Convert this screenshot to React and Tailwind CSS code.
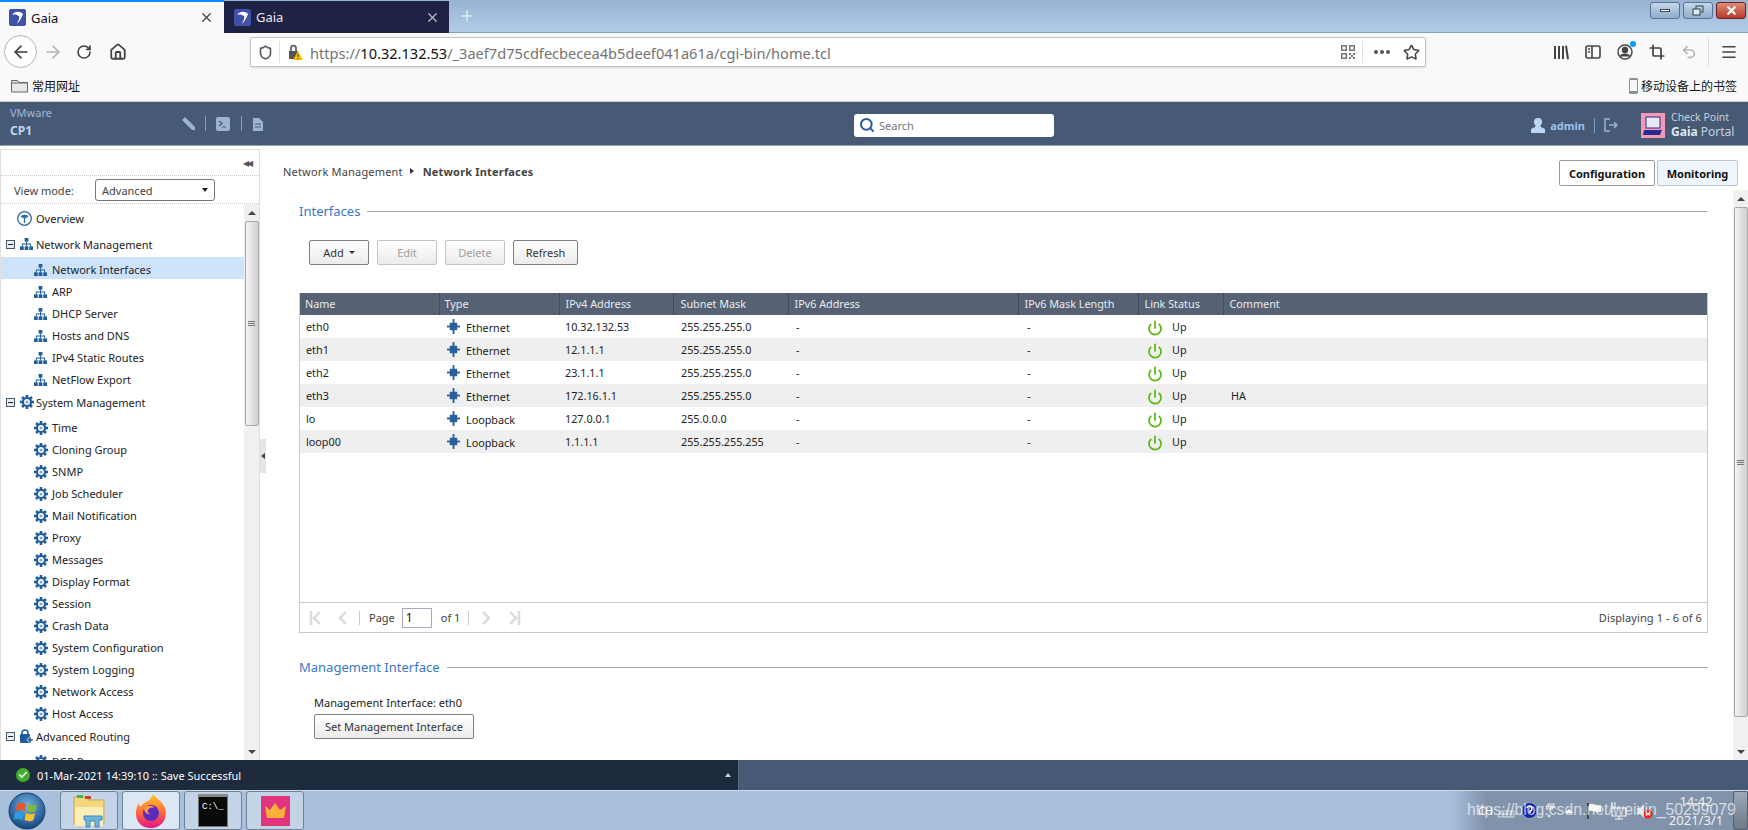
import { ArrowLeft, ArrowRight, RotateCw, Home, Shield, Star, Menu, Crop, Undo2, X, Plus, Power, Search, Check } from "lucide-react"

const netItems = ["Network Interfaces", "ARP", "DHCP Server", "Hosts and DNS", "IPv4 Static Routes", "NetFlow Export"]
const sysItems = ["Time", "Cloning Group", "SNMP", "Job Scheduler", "Mail Notification", "Proxy", "Messages", "Display Format", "Session", "Crash Data", "System Configuration", "System Logging", "Network Access", "Host Access"]

const rows = [
  ["eth0", "Ethernet", "10.32.132.53", "255.255.255.0", "Up", ""],
  ["eth1", "Ethernet", "12.1.1.1", "255.255.255.0", "Up", ""],
  ["eth2", "Ethernet", "23.1.1.1", "255.255.255.0", "Up", ""],
  ["eth3", "Ethernet", "172.16.1.1", "255.255.255.0", "Up", "HA"],
  ["lo", "Loopback", "127.0.0.1", "255.0.0.0", "Up", ""],
  ["loop00", "Loopback", "1.1.1.1", "255.255.255.255", "Up", ""],
]

const columns = [
  ["Name", "w-[139px] pl-[5px]"],
  ["Type", "w-[120px] pl-[5px]"],
  ["IPv4 Address", "w-[114px] pl-[6px]"],
  ["Subnet Mask", "w-[115px] pl-[7px]"],
  ["IPv6 Address", "w-[230px] pl-[6px]"],
  ["IPv6 Mask Length", "w-[120px] pl-[6px]"],
  ["Link Status", "w-[85px] pl-[6px]"],
  ["Comment", "pl-[6px]"],
]

const Favicon = () => (
  <svg width="17" height="17" viewBox="0 0 17 17" className="shrink-0">
    <rect width="17" height="17" rx="2" fill="#3f51a8" />
    <path d="M3 6c3-4 8-4 11-1-1 3-3 7-6 10 1-3 3-6 2-8-2-1-4-2-7-1z" fill="#fff" />
  </svg>
)

const NetIcon = () => (
  <svg width="13" height="12" viewBox="0 0 14 13" className="shrink-0" fill="#1f5d9c">
    <rect x="5" y="0" width="4" height="4" />
    <rect x="0" y="9" width="4" height="4" />
    <rect x="5" y="9" width="4" height="4" />
    <rect x="10" y="9" width="4" height="4" />
    <path d="M6.500 4h1v2H12v3h-1V7H7.500v2h-1V7H3v2H2V6h4.500z" />
  </svg>
)

const GearIcon = () => (
  <svg width="14" height="14" viewBox="0 0 16 16" className="shrink-0">
    {[0, 45, 90, 135].map((a) => (
      <rect key={a} x="6.500" y="0" width="3" height="16" fill="#1f5d9c" transform={`rotate(${a} 8 8)`} />
    ))}
    <circle cx="8" cy="8" r="5.800" fill="#1f5d9c" />
    <circle cx="8" cy="8" r="3.400" fill="#fff" />
    <circle cx="8" cy="8" r="1.800" fill="#7fa8d0" />
  </svg>
)

const ChipIcon = () => (
  <svg width="13" height="15" viewBox="0 0 14 16" className="shrink-0 -mt-[2px]" fill="#2b5f99">
    <rect x="3" y="4" width="8" height="8" />
    <rect x="0" y="7" width="14" height="2" />
    <rect x="6" y="0" width="2" height="16" />
  </svg>
)

const Minus = () => (
  <span className="w-[9px] h-[9px] border border-[#4a5a6a] bg-[#e8eef4] flex items-center justify-center shrink-0">
    <span className="w-[5px] h-px bg-[#222]" />
  </span>
)

const TreeHead = ({ icon, label }) => (
  <div className="h-[22px] my-[2px] pl-[5px] flex items-center shrink-0">
    <Minus />
    <span className="w-[21px] flex justify-center pl-[2px]">{icon}</span>
    <span>{label}</span>
  </div>
)

const TreeItem = ({ icon, label, active }) => (
  <div className={`h-[22px] pl-[33px] pt-[3px] flex items-center shrink-0 ${active ? "bg-[#cde3fb]" : ""}`}>
    <span className="w-[18px]">{icon}</span>
    <span>{label}</span>
  </div>
)

const Scrollbar = ({ grip }) => (
  <div className="w-[15px] shrink-0 bg-[#f0f0f0] flex flex-col items-center">
    <div className="h-[17px] w-full flex items-center justify-center">
      <span className="border-x-[4px] border-x-transparent border-b-[4px] border-b-[#444]" />
    </div>
    <div className={`w-[14px] ${grip} rounded-[2px] border border-[#a8a8a8] bg-linear-to-r from-[#f4f4f4] to-[#cfcfcf] flex flex-col gap-px items-center justify-center`}>
      <span className="w-[7px] h-px bg-[#777]" />
      <span className="w-[7px] h-px bg-[#777]" />
      <span className="w-[7px] h-px bg-[#777]" />
    </div>
    <div className="flex-1" />
    <div className="h-[17px] w-full flex items-center justify-center">
      <span className="border-x-[4px] border-x-transparent border-t-[4px] border-t-[#444]" />
    </div>
  </div>
)

const Btn = ({ children, disabled, className = "" }) => (
  <button className={`h-[25px] rounded-[2px] border bg-linear-to-b from-white to-[#ebebeb] flex items-center justify-center ${disabled ? "border-[#c4c4c4] text-[#a0a0a0]" : "border-[#7f7f7f] text-[#333]"} ${className}`}>
    {children}
  </button>
)

const SectionTitle = ({ children, className = "" }) => (
  <div className={`h-[20px] flex items-center gap-[7px] ${className}`}>
    <span className="text-[13px] text-[#3a78c9]">{children}</span>
    <span className="flex-1 h-px bg-[#a9a9a9]" />
  </div>
)

const WinBtn = ({ children, className = "" }) => (
  <div className={`w-[30px] h-[17px] rounded-[3px] border border-[#5c7290] flex items-center justify-center ${className}`}>{children}</div>
)

const TaskBtn = ({ children, lit }) => (
  <div className={`w-[58px] h-[39px] rounded-[3px] border border-[#6f8296] flex items-center justify-center ${lit ? "bg-[#dbe7f4]" : "bg-[#c3d4e8]"}`}>{children}</div>
)

export default function App() {
  return (
    <div className="w-[1748px] h-[830px] overflow-hidden relative flex flex-col bg-white text-[11px] leading-none text-[#222] font-['Noto_Sans',sans-serif]">
      {/* browser tabs */}
      <div className="h-[33px] shrink-0 flex bg-linear-to-b from-[#98b3d2] to-[#b2cde9] border-b border-[#8aa0b8]">
        <div className="w-[224px] h-[33px] bg-[#f9f9fa] border-t-2 border-[#0a84ff] flex items-center pl-[9px] pr-[10px] gap-[5px] text-[13px] text-[#111]">
          <Favicon />
          <span className="flex-1 pt-[1px]">Gaia</span>
          <X size={15} className="text-[#444]" />
        </div>
        <div className="w-[225px] h-[32px] mt-px bg-[#1e2244] flex items-center pl-[10px] pr-[9px] gap-[5px] text-[13px] text-[#e8e8f0]">
          <Favicon />
          <span className="flex-1 pt-[1px]">Gaia</span>
          <X size={15} className="text-[#bbb]" />
        </div>
        <div className="w-[36px] flex items-center justify-center">
          <Plus size={18} className="text-[#dfe8f2]" />
        </div>
        <div className="flex-1" />
        <div className="flex gap-[3px] pt-[2px] pr-[2px]">
          <WinBtn className="bg-linear-to-b from-[#c5d8ec] to-[#8eacca]"><span className="w-[10px] h-[3px] bg-white border border-[#445]" /></WinBtn>
          <WinBtn className="bg-linear-to-b from-[#c5d8ec] to-[#8eacca]">
            <svg width="12" height="11" viewBox="0 0 12 11" fill="none" stroke="#344" strokeWidth="1"><rect x="4" y="1" width="7" height="6" /><rect x="1" y="4" width="7" height="6" fill="#dde8f2" /></svg>
          </WinBtn>
          <WinBtn className="border-[#6e2020] bg-linear-to-b from-[#dc8a78] to-[#b8392a]"><X size={13} strokeWidth={4} className="text-white" /></WinBtn>
        </div>
      </div>

      {/* browser toolbar */}
      <div className="h-[37px] shrink-0 bg-[#f9f9fa] flex items-center relative">
        <div className="w-[33px] h-[33px] ml-[4px] rounded-full border border-[#b3b3b3] bg-white flex items-center justify-center">
          <ArrowLeft size={20} className="text-[#3c3c3c]" />
        </div>
        <ArrowRight size={20} className="ml-[6px] text-[#b4b4b4]" />
        <RotateCw size={16} className="ml-[13px] text-[#444]" strokeWidth={2.4} />
        <Home size={18} className="ml-[17px] text-[#444]" strokeWidth={2.4} />
        <div className="ml-[123px] mt-[1px] w-[1176px] h-[30px] bg-white border border-[#c4c4c4] rounded-[2px] flex items-center text-[14.600px] text-[#737373] shadow-sm">
          <Shield size={15} className="ml-[7px] text-[#555]" strokeWidth={2.5} />
          <span className="w-px h-[22px] bg-[#e0e0e0] ml-[6px]" />
          <span className="relative ml-[7px] w-[16px] h-[16px]">
            <svg width="16" height="16" viewBox="0 0 16 16">
              <path d="M2 7h9v8H2z" fill="#555" />
              <path d="M4 7V4a2.500 2.500 0 0 1 5 0v3" fill="none" stroke="#555" strokeWidth="1.600" />
              <path d="M11 7l5 9H6z" fill="#ffbf00" />
              <rect x="10.500" y="10" width="1" height="3" fill="#333" />
              <rect x="10.500" y="14" width="1" height="1" fill="#333" />
            </svg>
          </span>
          <span className="ml-[7px] pt-[2px] w-[530px] whitespace-nowrap">https://<span className="text-[#111]">10.32.132.53</span>/_3aef7d75cdfecbecea4b5deef041a61a/cgi-bin/home.tcl</span>
          <div className="flex-1" />
          <svg width="14" height="14" viewBox="0 0 14 14" fill="#777">
            <path d="M0 0h6v6H0zM1.500 1.500v3h3v-3zM8 0h6v6H8zM9.500 1.500v3h3v-3zM0 8h6v6H0zM1.500 9.500v3h3v-3zM8 8h2v2H8zM12 8h2v2h-2zM10 10h2v2h-2zM8 12h2v2H8zM12 12h2v2h-2z" />
          </svg>
          <span className="w-px h-[22px] bg-[#e0e0e0] ml-[7px]" />
          <span className="ml-[11px] flex gap-[2px]">
            <span className="w-[4px] h-[4px] rounded-full bg-[#555]" />
            <span className="w-[4px] h-[4px] rounded-full bg-[#555]" />
            <span className="w-[4px] h-[4px] rounded-full bg-[#555]" />
          </span>
          <Star size={17} className="ml-[13px] mr-[5px] text-[#444]" strokeWidth={2.2} />
        </div>
        <div className="flex-1" />
        <div className="flex items-center text-[#444] pr-[10px]">
          <svg width="16" height="16" viewBox="0 0 16 16" fill="#444"><path d="M1 2h2v13H1zM5 2h2v13H5zM9 2h2v13H9zM12 2l2-.5 2 13.500-2 .4z" /></svg>
          <svg width="16" height="16" viewBox="0 0 16 16" fill="none" stroke="#444" strokeWidth="1.600" className="ml-[16px]"><rect x="1" y="2" width="14" height="12" rx="2" /><path d="M7 2v12M3 5h2M3 8h2" /></svg>
          <span className="relative ml-[16px]">
            <svg width="16" height="16" viewBox="0 0 16 16" fill="none" stroke="#444" strokeWidth="1.400"><circle cx="8" cy="8" r="7" /><circle cx="8" cy="6" r="2.500" fill="#444" /><path d="M3.500 12.500c1-3 8-3 9 0" fill="#444" /></svg>
            <span className="absolute -top-[3px] -right-[3px] w-[6px] h-[6px] rounded-full bg-[#0a9dff]" />
          </span>
          <Crop size={16} strokeWidth={2.6} className="ml-[16px]" />
          <Undo2 size={16} strokeWidth={2.6} className="ml-[16px] text-[#b4b8bc]" />
          <span className="w-px h-[30px] bg-[#ddd] ml-[11px]" />
          <Menu size={18} strokeWidth={2.2} className="ml-[11px]" />
        </div>
      </div>

      {/* bookmarks */}
      <div className="h-[32px] shrink-0 bg-[#f9f9fa] border-b border-[#ccc] flex items-center pl-[11px] pr-[11px] text-[12px] text-[#111] font-['Noto_Sans_CJK_SC','Noto_Sans',sans-serif]">
        <svg width="17" height="14" viewBox="0 0 17 14" fill="#e8e8e8" stroke="#666"><path d="M.5 13V1.500h6l1.500 2h8.500V13z" /><path d="M.5 4h16" /></svg>
        <span className="ml-[4px]">常用网址</span>
        <div className="flex-1" />
        <svg width="9" height="16" viewBox="0 0 9 16" fill="#8a9298"><rect width="9" height="16" rx="1.500" /><rect x="1" y="2" width="7" height="11" fill="#f4f6f8" /></svg>
        <span className="ml-[3px]">移动设备上的书签</span>
      </div>

      {/* portal header */}
      <div className="h-[44px] shrink-0 bg-[#465a75] flex items-center border-b border-[#9aa5b3] relative">
        <div className="w-[172px] pl-[10px] flex flex-col gap-[7px] -mt-[4px]">
          <span className="text-[11px] text-[#9db8da]">VMware</span>
          <span className="text-[12px] font-bold text-[#bcd6f6]">CP1</span>
        </div>
        <div className="flex items-center text-[#9cb3d2]">
          <svg width="13" height="13" viewBox="0 0 13 13" fill="#9cb3d2" className="ml-[10px]"><path d="M0 3l3-3 10 10v3h-3z" /></svg>
          <span className="w-px h-[15px] bg-[#7aa0cc] ml-[10px]" />
          <svg width="14" height="14" viewBox="0 0 14 14" className="ml-[10px]"><rect width="14" height="14" rx="2" fill="#9cb3d2" /><path d="M3 4l3 2.500-3 2.500M6 10h4" stroke="#465a75" fill="none" strokeWidth="1.200" /></svg>
          <span className="w-px h-[15px] bg-[#7aa0cc] ml-[11px]" />
          <svg width="10" height="14" viewBox="0 0 10 14" className="ml-[11px]"><path d="M0 1h6l4 4v9H0z" fill="#9cb3d2" /><path d="M2 7h6M2 10h6" stroke="#465a75" /></svg>
        </div>
        <div className="ml-[591px] mt-[3px] w-[200px] h-[23px] rounded-[3px] bg-white flex items-center pl-[5px] gap-[4px] text-[#777]">
          <Search size={16} strokeWidth={3} className="text-[#2a5f9a]" />
          <span>Search</span>
        </div>
        <div className="flex-1" />
        <div className="flex items-center mt-[3px]">
          <svg width="14" height="16" viewBox="0 0 14 16" fill="#bcd6f6"><circle cx="7" cy="5" r="4" /><path d="M5 8h4l1 2 4 2v4H0v-4l4-2z" /></svg>
          <span className="ml-[5px] text-[#9ec0ea] font-bold">admin</span>
          <span className="w-px h-[15px] bg-[#7aa0cc] ml-[9px]" />
          <svg width="14" height="14" viewBox="0 0 14 14" fill="none" stroke="#9cb3d2" strokeWidth="1.500" className="ml-[9px]"><path d="M6 1H1v12h5M5 7h8M10 4l3 3-3 3" /></svg>
          <svg width="24" height="25" viewBox="0 0 24 25" className="ml-[23px]"><rect width="24" height="25" fill="#f59ab5" /><rect x="5" y="4" width="14" height="11" fill="#e9e6f5" stroke="#2a2a80" /><path d="M3 17h18l-2 5H2z" fill="#2a2a90" /></svg>
          <div className="ml-[6px] mr-[23px] w-[54px] flex flex-col gap-[3px] text-[#c5d0de] whitespace-nowrap">
            <span className="text-[10.500px]">Check Point</span>
            <span className="text-[12px]"><b className="text-[#dfe7f0]">Gaia</b> Portal</span>
          </div>
        </div>
      </div>

      {/* portal body */}
      <div className="flex-1 min-h-0 flex">
        <div className="w-[260px] shrink-0 flex flex-col border-x border-[#e0e0e0] mt-[3px] border-t">
          <div className="h-[26px] shrink-0 flex items-center justify-end pr-[5px] border-b border-dotted border-[#ccc]">
            <span className="text-[#555] text-[8px] tracking-[-2px] pr-[3px]">◀◀</span>
          </div>
          <div className="h-[28px] shrink-0 flex items-center pl-[13px] pt-[1px] border-b border-dotted border-[#ccc] text-[#444]">
            <span className="w-[81px]">View mode:</span>
            <div className="w-[120px] h-[22px] rounded-[3px] border border-[#777] flex items-center justify-between pl-[6px] pr-[6px]">
              <span>Advanced</span>
              <span className="border-x-[3px] border-x-transparent border-t-[4px] border-t-[#222]" />
            </div>
          </div>
          <div className="flex-1 min-h-0 flex">
            <div className="flex-1 flex flex-col overflow-hidden pt-[1px]">
              <div className="h-[22px] my-[2px] pl-[16px] flex items-center shrink-0">
                <svg width="15" height="15" viewBox="0 0 15 15" fill="none" stroke="#2b6aa5" strokeWidth="1.300" className="shrink-0"><circle cx="7.500" cy="7.500" r="6.800" /><path d="M7.500 12V6M4 6c1-2 6-2 7 0M5.500 7l2-2.500 2 2.500" /></svg>
                <span className="ml-[4px]">Overview</span>
              </div>
              <TreeHead icon={<NetIcon />} label="Network Management" />
              {netItems.map((l, i) => (
                <TreeItem key={l} icon={<NetIcon />} label={l} active={i === 0} />
              ))}
              <TreeHead icon={<GearIcon />} label="System Management" />
              {sysItems.map((l) => (
                <TreeItem key={l} icon={<GearIcon />} label={l} />
              ))}
              <TreeHead
                icon={
                  <svg width="15" height="14" viewBox="0 0 15 14" fill="#1f5d9c"><circle cx="6" cy="4" r="3" fill="none" stroke="#1f5d9c" strokeWidth="1.500" /><rect x="1" y="5" width="10" height="9" rx="1" /><path d="M10 8h2v2h2v2h-2v2h-2v-2H8v-2h2z" stroke="#fff" strokeWidth=".5" /></svg>
                }
                label="Advanced Routing"
              />
              <TreeItem icon={<GearIcon />} label="BGP Peers" />
            </div>
            <Scrollbar grip="h-[205px]" />
          </div>
        </div>
        <div className="w-[6px] shrink-0 flex items-center">
          <div className="w-[6px] h-[34px] mt-[6px] bg-[#e4e4e4] flex items-center justify-center">
            <span className="border-y-[3px] border-y-transparent border-r-[4px] border-r-[#444]" />
          </div>
        </div>

        <div className="flex-1 min-w-0 flex flex-col">
          <div className="h-[44px] shrink-0 flex items-start justify-between pl-[17px] pr-[10px] pt-[14px]">
            <div className="h-[26px] -mt-[2px] flex items-center text-[#444] tracking-[0.18px]">
              <span>Network Management</span>
              <span className="ml-[7px] mr-[9px] border-y-[3px] border-y-transparent border-l-[4px] border-l-[#333]" />
              <b className="text-[#444]">Network Interfaces</b>
            </div>
            <div className="flex gap-[2px] font-bold text-[#111]">
              <div className="w-[96px] h-[26px] rounded-[2px] border border-[#999] bg-white flex items-center justify-center">Configuration</div>
              <div className="w-[81px] h-[26px] rounded-[2px] border border-[#b8c4d2] bg-[#eff5fc] flex items-center justify-center">Monitoring</div>
            </div>
          </div>
          <div className="flex-1 min-h-0 flex">
            <div className="flex-1 min-w-0 pl-[33px]">
              <SectionTitle className="mt-[11px] mr-[26px]">Interfaces</SectionTitle>
              <div className="mt-[19px] ml-[10px] flex gap-[8px]">
                <Btn className="w-[60px] gap-[5px]">
                  Add <span className="border-x-[3px] border-x-transparent border-t-[3px] border-t-[#333]" />
                </Btn>
                <Btn disabled className="w-[60px]">Edit</Btn>
                <Btn disabled className="w-[60px]">Delete</Btn>
                <Btn className="w-[65px]">Refresh</Btn>
              </div>
              <div className="mt-[28px] mr-[25px] h-[340px] border border-t-0 border-[#c9c9c9] flex flex-col">
                <div className="flex-1 min-h-0">
                  <table className="w-full table-fixed border-collapse text-[10.800px]">
                    <thead>
                      <tr className="h-[22px] bg-[#566274] text-[#e8ecf0] text-left">
                        {columns.map(([c, w], i) => (
                          <th key={c} className={`${w} font-normal ${i ? "border-l border-[#3f4d60]" : ""}`}>{c}</th>
                        ))}
                      </tr>
                    </thead>
                    <tbody>
                      {rows.map((r, i) => (
                        <tr key={r[0]} className={`h-[23px] ${i % 2 ? "bg-[#efefef]" : "bg-white"}`}>
                          <td className="pl-[6px] pt-[2px]">{r[0]}</td>
                          <td className="pl-[8px]">
                            <span className="flex items-center gap-[6px] pt-[2px]"><ChipIcon /><span className="pt-[2px]">{r[1]}</span></span>
                          </td>
                          <td className="pl-[6px] pt-[2px]">{r[2]}</td>
                          <td className="pl-[8px] pt-[2px]">{r[3]}</td>
                          <td className="pl-[8px] pt-[2px]">-</td>
                          <td className="pl-[9px] pt-[2px]">-</td>
                          <td className="pl-[9px]">
                            <span className="flex items-center gap-[9px] pt-[2px]"><Power size={16} strokeWidth={2.6} className="text-[#5cb811]" />{r[4]}</span>
                          </td>
                          <td className="pl-[8px] pt-[2px]">{r[5]}</td>
                        </tr>
                      ))}
                    </tbody>
                  </table>
                </div>
                <div className="h-[30px] shrink-0 border-t border-[#c9c9c9] flex items-center pl-[9px] pr-[5px] text-[#444]">
                  <svg width="12" height="14" viewBox="0 0 12 14" fill="none" stroke="#dcdcdc" strokeWidth="2.500"><path d="M2 0v14M11 1L5 7l6 6" /></svg>
                  <svg width="9" height="14" viewBox="0 0 9 14" fill="none" stroke="#dcdcdc" strokeWidth="2.500" className="ml-[17px]"><path d="M8 1L2 7l6 6" /></svg>
                  <span className="w-px h-[14px] bg-[#ccc] ml-[12px]" />
                  <span className="ml-[9px]">Page</span>
                  <div className="ml-[7px] w-[30px] h-[20px] border border-[#a8a8c0] flex items-center pl-[3px] text-[12px] text-[#111]">1</div>
                  <span className="ml-[9px]">of 1</span>
                  <span className="w-px h-[14px] bg-[#ccc] ml-[8px]" />
                  <svg width="9" height="14" viewBox="0 0 9 14" fill="none" stroke="#dcdcdc" strokeWidth="2.500" className="ml-[13px]"><path d="M1 1l6 6-6 6" /></svg>
                  <svg width="12" height="14" viewBox="0 0 12 14" fill="none" stroke="#dcdcdc" strokeWidth="2.500" className="ml-[18px]"><path d="M10 0v14M1 1l6 6-6 6" /></svg>
                  <div className="flex-1" />
                  <span className="tracking-[0.1px]">Displaying 1 - 6 of 6</span>
                </div>
              </div>
              <SectionTitle className="mt-[24px] mr-[25px]">Management Interface</SectionTitle>
              <div className="mt-[17px] ml-[15px] h-[16px] flex items-center">Management Interface: eth0</div>
              <Btn className="mt-[4px] ml-[15px] w-[160px]">Set Management Interface</Btn>
            </div>
            <Scrollbar grip="h-[510px]" />
          </div>
        </div>
      </div>

      {/* status bar */}
      <div className="h-[30px] shrink-0 flex bg-[#465a75]">
        <div className="w-[739px] bg-[#1e2a3e] flex items-center pl-[16px] text-white border-r border-[#5a6a80]">
          <span className="w-[14px] h-[14px] rounded-full bg-[#3fae2a] flex items-center justify-center">
            <Check size={10} strokeWidth={4} className="text-white" />
          </span>
          <span className="ml-[7px] flex-1">01-Mar-2021 14:39:10 :: Save Successful</span>
          <span className="mr-[7px] border-x-[3px] border-x-transparent border-b-[4px] border-b-[#c8d4e4]" />
        </div>
      </div>

      {/* windows taskbar */}
      <div className="h-[40px] shrink-0 border-t border-[#d0dcea] flex items-center bg-linear-to-r from-[#a8c0dc] from-[83%] to-[#8193ab] to-[85%]">
        <svg width="38" height="38" viewBox="0 0 38 38" className="ml-[8px]">
          <defs>
            <radialGradient id="orb" cx="50%" cy="35%" r="70%"><stop offset="0" stopColor="#6fb3e6" /><stop offset="1" stopColor="#0e3d78" /></radialGradient>
          </defs>
          <circle cx="19" cy="19" r="18" fill="url(#orb)" stroke="#1d3d66" />
          <path d="M9 12c3-2 6-1 9 0l-1.500 7c-3-1-6-2-9 0z" fill="#e8552d" />
          <path d="M20 12c3 1 6 2 9 0l-1.500 7c-3 2-6 1-9 0z" fill="#7db93a" />
          <path d="M7 21c3-2 6-1 9 0l-1.500 7c-3-1-6-2-9 0z" fill="#2f9ae0" />
          <path d="M18 21c3 1 6 2 9 0l-1.500 7c-3 2-6 1-9 0z" fill="#f8c32f" />
        </svg>
        <div className="ml-[14px] flex gap-[4px]">
          <TaskBtn>
            <svg width="32" height="34" viewBox="0 0 32 34">
              <path d="M1 3h13l2 3h15v24H1z" fill="#f3d67e" stroke="#c9a94d" />
              <rect x="4" y="1" width="6" height="3" fill="#4caf50" />
              <rect x="12" y="2" width="6" height="3" fill="#d9402c" />
              <path d="M2 13h28v19H2z" fill="#fbeeb8" />
              <path d="M11 22h18v4h-3v7h-4v-6h-5v6h-4v-7h-2z" fill="#6fb3dc" stroke="#3c88b8" />
            </svg>
          </TaskBtn>
          <TaskBtn lit>
            <svg width="32" height="34" viewBox="0 0 32 34">
              <defs>
                <linearGradient id="fx" x1="0" y1="0" x2="0" y2="1"><stop offset="0" stopColor="#ffc928" /><stop offset=".5" stopColor="#ff7139" /><stop offset="1" stopColor="#e31587" /></linearGradient>
              </defs>
              <path d="M18 0c2 3 9 7 12 14 3 9-2 20-14 20C6 34 0 27 1 17c.5-3 1.500-6 3-8 0 2 1 3 2 4 1-4 6-5 8-7 2-2 3-4 4-6z" fill="url(#fx)" />
              <circle cx="16" cy="19" r="8" fill="#5b2bbd" />
              <path d="M9 14c3-3 8-3 11 0-3-1-6 0-7 2s1 4 3 4c-4 1-7-2-7-6z" fill="#ff9a3c" />
            </svg>
          </TaskBtn>
          <TaskBtn>
            <div className="w-[30px] h-[33px] bg-[#0a0a0a] border border-[#777] border-t-[3px] border-t-[#8a8a8a] text-white text-[9px] font-['Liberation_Mono',monospace] pt-[6px] pl-[3px]">C:\_</div>
          </TaskBtn>
          <TaskBtn>
            <div className="w-[29px] h-[30px] bg-[#e0347c] flex items-center justify-center">
              <svg width="21" height="15" viewBox="0 0 21 15" fill="#f9b13a"><path d="M0 3l5 4 5-7 5 7 6-4-2 12H2z" /></svg>
            </div>
          </TaskBtn>
        </div>
        <div className="flex-1" />
        <div className="flex items-center text-white text-[11px] h-full">
          <span className="mr-[4px]">CH</span>
          <svg width="18" height="14" viewBox="0 0 18 14" fill="none" stroke="#d8dde4" className="mr-[6px]"><path d="M1 13l3-6h13v6zM6 7v6M10 7v6M14 7v6M2 10h14" /></svg>
          <svg width="17" height="17" viewBox="0 0 17 17" className="mr-[8px]"><circle cx="8.500" cy="8.500" r="8" fill="#1226a8" stroke="#9fb0c8" /><path d="M6 6a2.500 2.500 0 1 1 3 3v2" stroke="#fff" fill="none" strokeWidth="1.500" /></svg>
          <svg width="9" height="16" viewBox="0 0 9 16" fill="none" stroke="#eee" className="mr-[10px]"><rect x="2" y="1" width="6" height="3" /><rect x=".5" y="3" width="6" height="3" /><circle cx="3" cy="13" r="1" fill="#ddd" /></svg>
          <span className="mr-[14px] border-x-[4px] border-x-transparent border-b-[4px] border-b-white" />
          <svg width="15" height="16" viewBox="0 0 15 16" className="mr-[7px]"><path d="M1 0v16" stroke="#333" strokeWidth="1.500" /><path d="M2 1c4-1 7 2 12 1v7c-5 1-8-2-12-1z" fill="#f4f4f4" /></svg>
          <svg width="18" height="18" viewBox="0 0 18 18" fill="none" stroke="#fff" className="mr-[10px]"><rect x="3" y="6" width="14" height="8" /><path d="M10 14v3M6 17h8M3 0v6M6 0v6" /></svg>
          <svg width="16" height="16" viewBox="0 0 16 16" className="mr-[6px]"><path d="M0 5h3l4-4v14l-4-4H0z" fill="#d8dde4" /><circle cx="11" cy="11" r="4.500" fill="#e22" /><path d="M9 9l4 4M13 9l-4 4" stroke="#fff" /></svg>
          <div className="w-[74px] flex flex-col items-center gap-[6px] text-[13px] text-[#f0f0f0] leading-none">
            <span>14:42</span>
            <span>2021/3/1</span>
          </div>
          <div className="w-[15px] h-full rounded-[2px] border border-[#555f70] bg-linear-to-b from-[#9aa8b8] to-[#6d7a8a]" />
        </div>
      </div>

      {/* csdn watermark */}
      <span className="absolute left-[1467px] top-[800px] text-[15.800px] leading-[20px] text-white/65 font-['Liberation_Sans',sans-serif] whitespace-nowrap">https://blog.csdn.net/weixin_50299079</span>
    </div>
  )
}
